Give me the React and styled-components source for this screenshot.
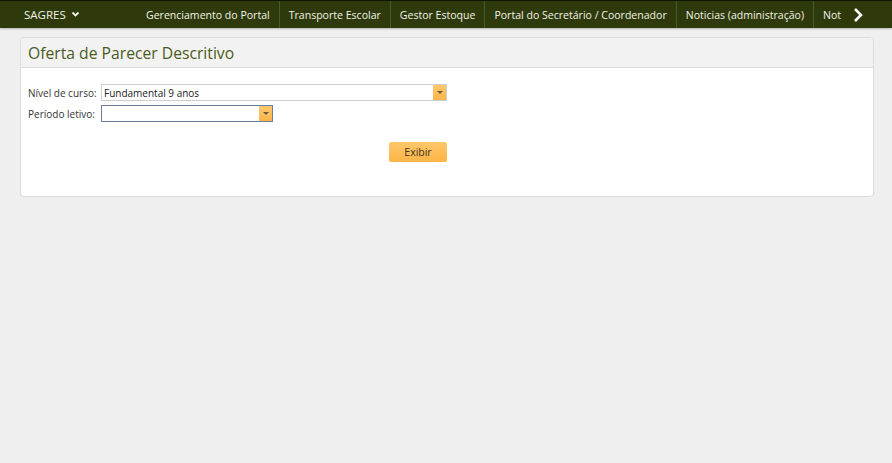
import * as React from 'react';
import styled, { createGlobalStyle } from 'styled-components';

const GlobalStyle = createGlobalStyle`
  html, body {
    margin: 0;
    padding: 0;
    background: #efefef;
    font-family: "Open Sans", "Segoe UI", sans-serif;
  }
`;

const NavBar = styled.div`
  height: 28px;
  background: #2e3a0b;
  border-top: 1px solid #10150a;
  box-sizing: border-box;
  display: flex;
  align-items: stretch;
  color: #f2f2e6;
  font-size: 10.55px;
  box-shadow: 0 1px 2px rgba(0, 0, 0, 0.25);
`;

const Brand = styled.div`
  display: flex;
  align-items: center;
  gap: 5px;
  padding-left: 24px;
  width: 113px;
  flex-shrink: 0;
  font-size: 11.5px;
`;

const Menu = styled.div`
  display: flex;
  flex: 1;
  overflow: hidden;
  white-space: nowrap;
`;

const MenuItem = styled.div`
  display: flex;
  align-items: center;
  padding: 0 9px;
  border-right: ${(p) => (p.$last ? 'none' : '1px solid #4b5a2a')};
`;

const Next = styled.div`
  display: flex;
  align-items: center;
  padding-right: 28px;
`;

const Page = styled.div`
  padding: 9px 18px 0 20px;
`;

const Card = styled.div`
  background: #fff;
  border: 1px solid #dcdcdc;
  border-radius: 4px;
  overflow: hidden;
`;

const CardHeader = styled.div`
  height: 29px;
  background: #f2f2f2;
  border-bottom: 1px solid #dcdcdc;
  display: flex;
  align-items: center;
  padding-left: 7px;
  font-size: 15.7px;
  color: #4a5a1c;
`;

const CardBody = styled.div`
  padding: 16px 7px 34px;
  display: flex;
  flex-direction: column;
  gap: 4px;
`;

const Row = styled.div`
  display: flex;
  align-items: center;
  font-size: 10px;
  color: #333;
`;

const Label = styled.div`
  width: 73px;
`;

const Select = styled.div`
  width: ${(p) => p.$w}px;
  height: 17px;
  box-sizing: border-box;
  border: 1px solid ${(p) => (p.$focus ? '#6a7f9f' : '#cfcfcf')};
  display: flex;
  align-items: stretch;
  background: #fff;
`;

const SelectText = styled.div`
  flex: 1;
  padding-left: 2px;
  display: flex;
  align-items: center;
  color: #222;
`;

const Arrow = styled.div`
  width: 13px;
  background: linear-gradient(#ffc86e, #fbb54a);
  display: flex;
  align-items: center;
  justify-content: center;
`;

const Tri = styled.div`
  width: 0;
  height: 0;
  border-left: 3px solid transparent;
  border-right: 3px solid transparent;
  border-top: 3px solid #6b5a3a;
`;

const Actions = styled.div`
  display: flex;
  padding-left: 361px;
  margin-top: 16px;
`;

const Button = styled.button`
  width: 58px;
  height: 20px;
  border: none;
  border-radius: 2px;
  background: linear-gradient(#ffc76b, #fcb446);
  font-family: inherit;
  font-size: 10.5px;
  color: #3b3220;
  padding: 0;
`;

const items = [
  'Gerenciamento do Portal',
  'Transporte Escolar',
  'Gestor Estoque',
  'Portal do Secretário / Coordenador',
  'Noticias (administração)',
  'Not',
];

export default function App() {
  return (
    <>
      <GlobalStyle />
      <NavBar>
        <Brand>
          SAGRES
          <svg width="9" height="7" viewBox="0 0 9 7">
            <path d="M1.5 1.5 L4.5 4.5 L7.5 1.5" stroke="#f2f2e6" strokeWidth="1.8" fill="none" />
          </svg>
        </Brand>
        <Menu>
          {items.map((t, i) => (
            <MenuItem key={t} $last={i === items.length - 1}>{t}</MenuItem>
          ))}
        </Menu>
        <Next>
          <svg width="12" height="16" viewBox="0 0 12 16">
            <path d="M3 2 L9 8 L3 14" stroke="#fff" strokeWidth="2.6" fill="none" />
          </svg>
        </Next>
      </NavBar>
      <Page>
        <Card>
          <CardHeader>Oferta de Parecer Descritivo</CardHeader>
          <CardBody>
            <Row>
              <Label>Nível de curso:</Label>
              <Select $w={346}>
                <SelectText>Fundamental 9 anos</SelectText>
                <Arrow><Tri /></Arrow>
              </Select>
            </Row>
            <Row>
              <Label>Período letivo:</Label>
              <Select $w={172} $focus>
                <SelectText />
                <Arrow><Tri /></Arrow>
              </Select>
            </Row>
            <Actions>
              <Button>Exibir</Button>
            </Actions>
          </CardBody>
        </Card>
      </Page>
    </>
  );
}
